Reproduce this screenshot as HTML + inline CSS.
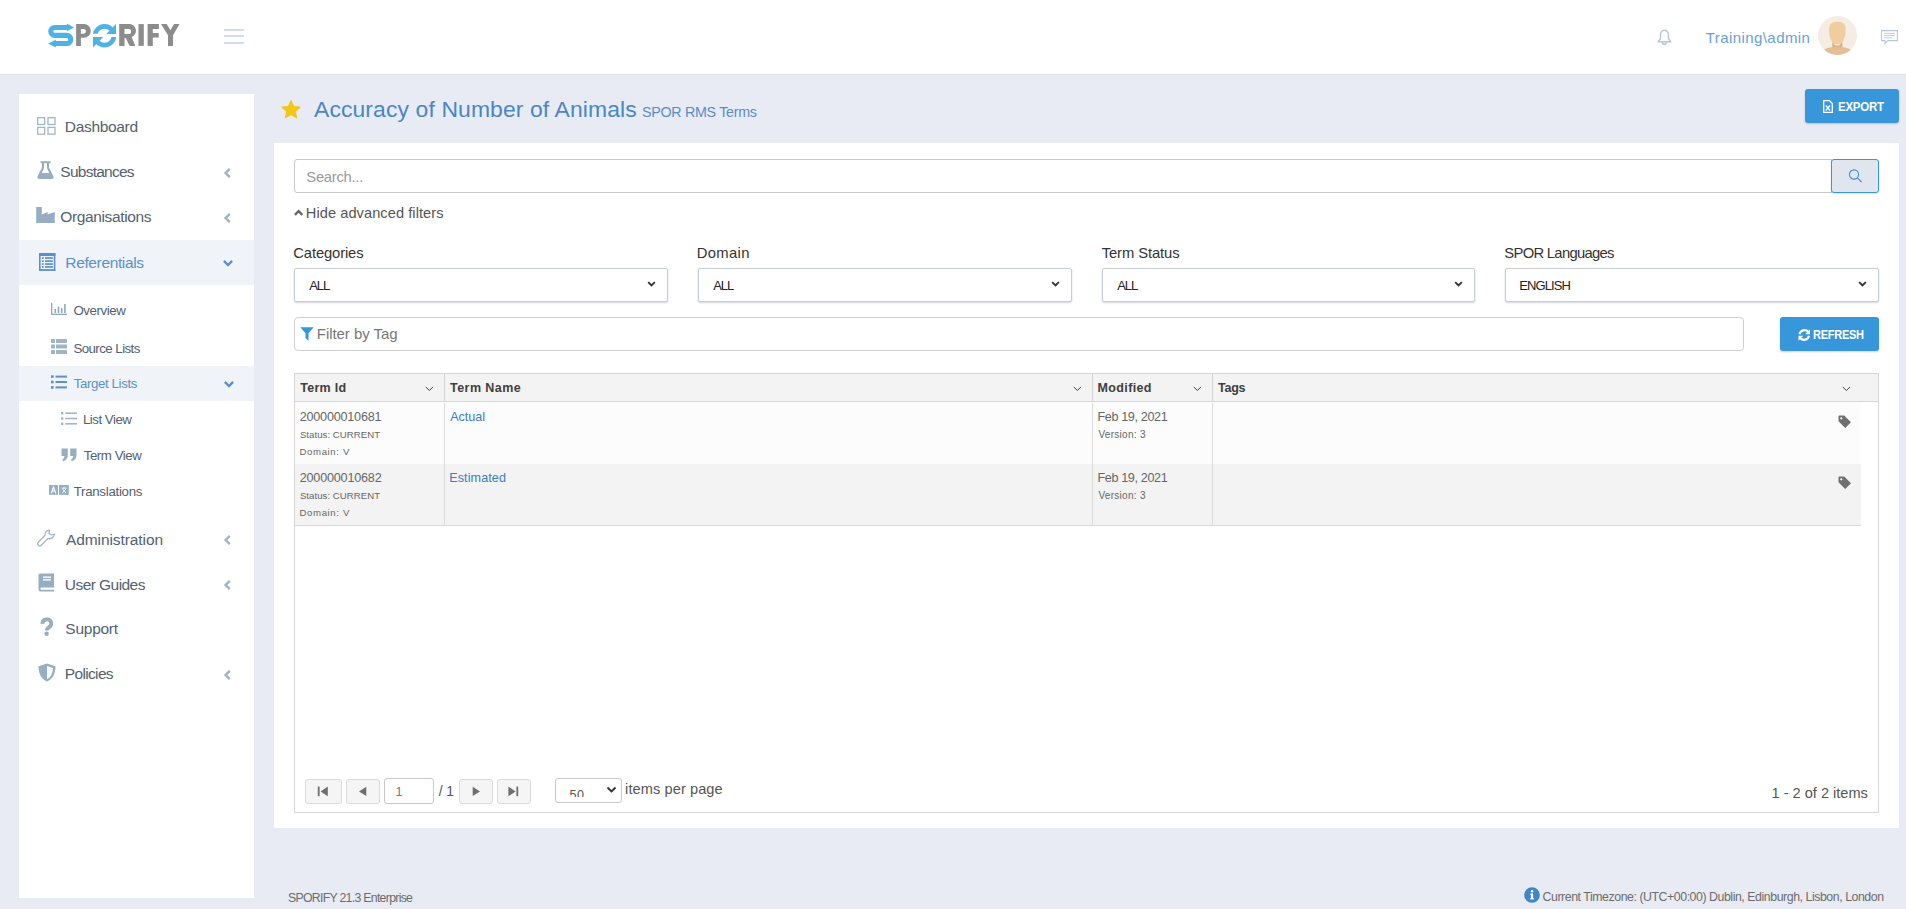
<!DOCTYPE html>
<html><head><meta charset="utf-8">
<style>
*{box-sizing:border-box;margin:0;padding:0}
html,body{width:1906px;height:909px;overflow:hidden}
body{background:#e8ebf3;font-family:"Liberation Sans",sans-serif;color:#333;position:relative}
.t{position:absolute;white-space:nowrap;line-height:1}
.b{position:absolute}
svg{position:absolute;overflow:visible}
</style></head>
<body>
<div class="b" style="left:0px;top:0px;width:1906px;height:74px;background:#fff;border-bottom:1px solid #dde1ea;height:75px"></div>
<svg style="left:40px;top:18px" width="150" height="34" viewBox="40 18 150 34">
<g fill="#8c8c8c">
<path fill-rule="evenodd" d="M76.1,24.1H84A6.8,6.8 0 0 1 84,37.7H80.9V46H76.1Z M80.9,28.9H83.5A2.45,2.45 0 0 1 83.5,33.8H80.9Z"/>
<path fill-rule="evenodd" d="M119.2,24.1H129A6.6,6.6 0 0 1 131.6,36.9L135.4,45.9H129.6L125.9,38.1H124.5V45.9H119.2Z M124.5,28.9H128.6A2.55,2.55 0 0 1 128.6,34H124.5Z"/>
<rect x="138.5" y="24.1" width="5.3" height="21.8"/>
<path d="M147.6,24.1H158.9V28.9H152.8V33.1H158.7V37.5H152.8V45.9H147.6Z"/>
<path d="M161,24.1H166.7L170.4,30.3L174,24.1H179.5L173,35.2V45.9H168V35.2Z"/>
</g>
<g fill="#4fb2e4">
<path d="M67.5,27.5H54.75A3.95,3.95 0 0 0 54.75,35.4H66.7A4.07,4.07 0 0 1 66.7,43.55H54.5" fill="none" stroke="#4fb2e4" stroke-width="5.1"/>
<path d="M66.8,23.4L74.1,27.4L66.8,31.3Z"/>
<path d="M55.8,39.7L48.2,43.5L55.8,47.4Z"/>
<clipPath id="cu"><path d="M91,22H117V33.8H91Z"/></clipPath>
<clipPath id="cl"><path d="M91,37.1H118V50H91Z"/></clipPath>
<circle cx="104.5" cy="35.75" r="9.45" fill="none" stroke="#4fb2e4" stroke-width="4.7" clip-path="url(#cu)"/>
<circle cx="104.5" cy="35.75" r="9.45" fill="none" stroke="#4fb2e4" stroke-width="4.7" clip-path="url(#cl)"/>
<path d="M116,24.1V33.9H106.3Z"/>
<path d="M93,47.6V37.1H103.2Z"/>
</g></svg>
<div class="b" style="left:224px;top:28.5px;width:20px;height:2px;background:#d3dce8"></div>
<div class="b" style="left:224px;top:35px;width:20px;height:2px;background:#d3dce8"></div>
<div class="b" style="left:224px;top:41.5px;width:20px;height:2px;background:#d3dce8"></div>
<svg style="left:1656.5px;top:28.5px" width="15" height="16" viewBox="0 0 15 16"><path d="M3.5,9.5V5.6A3.95,4.3 0 0 1 11.4,5.6V9.5L13.7,12.8H1.2L3.5,9.5Z" fill="none" stroke="#b5c5da" stroke-width="1.45" stroke-linejoin="round"/>
<path d="M5.2,13.2A2.1,2.1 0 0 0 9.4,13.2" fill="none" stroke="#b5c5da" stroke-width="1.4"/></svg>
<div class="t" style="left:1705.7px;top:30.3px;font-size:15px;color:#6a9fd6;letter-spacing:0.43px;">Training\admin</div>
<svg style="left:1818px;top:16px" width="39" height="39" viewBox="0 0 39 39"><circle cx="19.5" cy="19.5" r="19.5" fill="#f5ede3"/>
<clipPath id="avc"><circle cx="19.5" cy="19.5" r="19.5"/></clipPath>
<g clip-path="url(#avc)">
<path d="M0,42 L2,38 C6,32 12,30.8 19.3,30.5 C26.5,30.8 32.5,32 36.5,38 L39,42Z" fill="#e4bf93"/>
<path d="M14.5,24 C15,27 16.5,29.5 19.3,29.8 C22,29.5 23.8,27 24.2,24 L24.5,30.8 C22.5,31.5 16,31.5 14.2,30.8Z" fill="#dcb184"/>
<path d="M11,13.2 C11,7.6 14.5,5.8 19.3,5.8 C24.1,5.8 27.6,7.6 27.6,13.2 C27.6,19 26.3,23 24.7,25.5 C23.2,27.6 21.3,28.3 19.3,28.3 C17.3,28.3 15.4,27.6 13.9,25.5 C12.3,23 11,19 11,13.2Z" fill="#f0cd9e"/>
</g></svg>
<svg style="left:1881px;top:30px" width="17" height="14" viewBox="0 0 17 14"><path d="M0.6,0.6 H16.4 V10.6 H7 L4,13.5 V10.6 H0.6Z" fill="none" stroke="#b9c7d8" stroke-width="1.1"/>
<path d="M3,3.4H14M3,5.6H14M3,7.8H11" stroke="#b9c7d8" stroke-width="0.9"/></svg>
<div class="b" style="left:19px;top:94px;width:235px;height:804px;background:#fff"></div>
<div class="b" style="left:19px;top:240px;width:235px;height:45px;background:#f0f3f8"></div>
<div class="b" style="left:19px;top:366px;width:235px;height:35px;background:#f0f3f8"></div>
<div class="t" style="left:64.8px;top:118.9px;font-size:15.5px;color:#536170;letter-spacing:-0.32px;">Dashboard</div>
<div class="t" style="left:60.3px;top:164.1px;font-size:15.5px;color:#536170;letter-spacing:-0.75px;">Substances</div>
<div class="t" style="left:60.3px;top:208.9px;font-size:15.5px;color:#536170;letter-spacing:-0.37px;">Organisations</div>
<div class="t" style="left:65.3px;top:254.8px;font-size:15.5px;color:#5b90cc;letter-spacing:-0.36px;">Referentials</div>
<div class="t" style="left:73.4px;top:304.1px;font-size:13.3px;color:#536170;letter-spacing:-0.41px;">Overview</div>
<div class="t" style="left:73.4px;top:341.5px;font-size:13.3px;color:#536170;letter-spacing:-0.56px;">Source Lists</div>
<div class="t" style="left:73.7px;top:377.2px;font-size:13.3px;color:#5b90cc;letter-spacing:-0.39px;">Target Lists</div>
<div class="t" style="left:82.9px;top:413.2px;font-size:13.3px;color:#536170;letter-spacing:-0.49px;">List View</div>
<div class="t" style="left:83.7px;top:449.2px;font-size:13.3px;color:#536170;letter-spacing:-0.45px;">Term View</div>
<div class="t" style="left:73.7px;top:485.2px;font-size:13.3px;color:#536170;letter-spacing:-0.29px;">Translations</div>
<div class="t" style="left:66.0px;top:531.5px;font-size:15.5px;color:#536170;letter-spacing:-0.09px;">Administration</div>
<div class="t" style="left:64.8px;top:576.5px;font-size:15.5px;color:#536170;letter-spacing:-0.55px;">User Guides</div>
<div class="t" style="left:65.3px;top:620.5px;font-size:15.5px;color:#536170;letter-spacing:-0.25px;">Support</div>
<div class="t" style="left:64.8px;top:666.2px;font-size:15.5px;color:#536170;letter-spacing:-0.66px;">Policies</div>
<svg style="left:220px;top:164.9px" width="16" height="16" viewBox="0 0 16 16"><path d="M9.8,3.9 L5.6,8 L9.8,12.1" fill="none" stroke="#9fb3c5" stroke-width="2.4"/></svg>
<svg style="left:220px;top:209.9px" width="16" height="16" viewBox="0 0 16 16"><path d="M9.8,3.9 L5.6,8 L9.8,12.1" fill="none" stroke="#9fb3c5" stroke-width="2.4"/></svg>
<svg style="left:220px;top:532px" width="16" height="16" viewBox="0 0 16 16"><path d="M9.8,3.9 L5.6,8 L9.8,12.1" fill="none" stroke="#9fb3c5" stroke-width="2.4"/></svg>
<svg style="left:220px;top:577px" width="16" height="16" viewBox="0 0 16 16"><path d="M9.8,3.9 L5.6,8 L9.8,12.1" fill="none" stroke="#9fb3c5" stroke-width="2.4"/></svg>
<svg style="left:220px;top:666.8px" width="16" height="16" viewBox="0 0 16 16"><path d="M9.8,3.9 L5.6,8 L9.8,12.1" fill="none" stroke="#9fb3c5" stroke-width="2.4"/></svg>
<svg style="left:220.2px;top:256.9px" width="16" height="16" viewBox="0 0 16 16"><path d="M3.9,3.9 L8,8 L12.1,3.9" fill="none" stroke="#5b90cc" stroke-width="2.4"/></svg>
<svg style="left:221.2px;top:378px" width="16" height="16" viewBox="0 0 16 16"><path d="M3.9,3.9 L8,8 L12.1,3.9" fill="none" stroke="#5b90cc" stroke-width="2.4"/></svg>
<svg style="left:37px;top:117px" width="19" height="18" viewBox="0 0 19 18"><g fill="none" stroke="#a3b6c8" stroke-width="1.3"><rect x="0.7" y="0.7" width="7" height="6.8"/><rect x="11" y="0.7" width="7" height="6.8"/><rect x="0.7" y="10.4" width="7" height="6.8"/><rect x="11" y="10.4" width="7" height="6.8"/></g></svg>
<svg style="left:37px;top:161px" width="17" height="18" viewBox="0 0 17 18"><path d="M3.5,0.3H13.5V2.2H12V6.5L16.5,15.5C17,17 16,18 14.5,18H2.5C1,18 0,17 0.5,15.5L5,6.5V2.2H3.5Z" fill="#97aec2"/><path d="M7,2.2H10V7.2L12.2,12H4.8L7,7.2Z" fill="#fff"/></svg>
<svg style="left:36px;top:207px" width="19" height="17" viewBox="0 0 19 17"><path d="M0.2,0H5.8V7.4L11.7,5V7.4L18.75,5V16H0.2Z" fill="#97aec2"/></svg>
<svg style="left:39px;top:252.9px" width="16.4" height="18" viewBox="0 0 16.4 18"><g fill="#5b90cc"><rect x="0" y="0" width="16.4" height="3"/><rect x="0" y="0" width="1.6" height="17.9"/><rect x="14.8" y="0" width="1.6" height="17.9"/><rect x="0" y="16.1" width="16.4" height="1.8"/><rect x="2.9" y="4.2" width="1.8" height="1.7"/><rect x="6" y="4.2" width="7.9" height="1.7"/><rect x="2.9" y="7.3" width="1.8" height="1.7"/><rect x="6" y="7.3" width="7.9" height="1.7"/><rect x="2.9" y="10.2" width="1.8" height="1.7"/><rect x="6" y="10.2" width="7.9" height="1.7"/><rect x="2.9" y="13.1" width="1.8" height="1.7"/><rect x="6" y="13.1" width="7.9" height="1.7"/></g></svg>
<svg style="left:51px;top:303px" width="16" height="12" viewBox="0 0 16 12"><g fill="#8fa8bd"><rect x="0" y="0" width="1.3" height="12"/><rect x="0" y="10.7" width="16" height="1.3"/><rect x="3.5" y="6" width="1.6" height="4"/><rect x="6.7" y="3.5" width="1.6" height="6.5"/><rect x="9.9" y="5" width="1.6" height="5"/><rect x="13.1" y="1" width="1.6" height="9"/></g></svg>
<svg style="left:51px;top:339px" width="16" height="15" viewBox="0 0 16 15"><g fill="#a0b4c6"><rect x="0" y="0" width="4" height="4"/><rect x="5" y="0" width="11" height="4"/><rect x="0" y="5.5" width="4" height="4"/><rect x="5" y="5.5" width="11" height="4"/><rect x="0" y="11" width="4" height="4"/><rect x="5" y="11" width="11" height="4"/></g></svg>
<svg style="left:51px;top:375px" width="16" height="14" viewBox="0 0 16 14"><g fill="#5b90cc"><rect x="0" y="0.3" width="2.6" height="2.6"/><rect x="4.5" y="0.6" width="11.5" height="2"/><rect x="0" y="5.7" width="2.6" height="2.6"/><rect x="4.5" y="6" width="11.5" height="2"/><rect x="0" y="11.1" width="2.6" height="2.6"/><rect x="4.5" y="11.4" width="11.5" height="2"/></g></svg>
<svg style="left:61px;top:411.5px" width="16" height="13" viewBox="0 0 16 13"><g fill="#a3b6c8"><rect x="0" y="0" width="2.4" height="2.4"/><rect x="4.2" y="0.4" width="11.8" height="1.6"/><rect x="0" y="5.3" width="2.4" height="2.4"/><rect x="4.2" y="5.7" width="11.8" height="1.6"/><rect x="0" y="10.6" width="2.4" height="2.4"/><rect x="4.2" y="11" width="11.8" height="1.6"/></g></svg>
<svg style="left:61px;top:447.5px" width="16" height="13.5" viewBox="0 0 16 13.5"><g fill="#97aec2"><path d="M0.5,0.5H6.8V7C6.8,10 5,12.5 2,13.3L1.3,11.5C2.8,10.8 3.5,9.5 3.5,8H0.5Z"/><path d="M9.2,0.5H15.5V7C15.5,10 13.7,12.5 10.7,13.3L10,11.5C11.5,10.8 12.2,9.5 12.2,8H9.2Z"/></g></svg>
<svg style="left:49.2px;top:485px" width="20" height="10" viewBox="0 0 20 10"><rect x="0" y="0" width="9" height="9.8" fill="#97aec2"/><rect x="10" y="0" width="9.8" height="9.8" fill="#97aec2"/><path d="M2.3,8.2L4.5,2.2L6.7,8.2M3.2,6H5.8" fill="none" stroke="#fff" stroke-width="1.1"/><path d="M12.8,3.2H17.5M15,2V3.2M13.5,4L17,8M16.8,4L13.3,8" stroke="#fff" stroke-width="0.9"/></svg>
<svg style="left:37px;top:529px" width="19" height="18" viewBox="0 0 19 18"><path d="M12.5,0.8A5,5 0 0 0 8,6.5L1.3,13.3A2.1,2.1 0 0 0 4.3,16.3L11,9.5A5,5 0 0 0 17.5,5L14.8,6L12,4.5L12.5,0.8Z" fill="none" stroke="#a3b6c8" stroke-width="1.3" stroke-linejoin="round"/></svg>
<svg style="left:38px;top:572.5px" width="17" height="19" viewBox="0 0 17 19"><path d="M2,0.5H16V14.5H3A1.5,1.5 0 0 0 3,16.8H16V18.5H2.5A2,2 0 0 1 0.5,16.5V2A1.5,1.5 0 0 1 2,0.5Z" fill="#97aec2"/><rect x="5" y="3.5" width="8" height="1.4" fill="#fff"/><rect x="5" y="6.2" width="8" height="1.4" fill="#fff"/></svg>
<svg style="left:40px;top:618px" width="14" height="18" viewBox="0 0 14 18"><path d="M2.5,5.8A4.4,4.1 0 1 1 9.2,9C7.6,10.1 6.7,10.8 6.7,12.6" fill="none" stroke="#97aec2" stroke-width="3.9"/><circle cx="6.6" cy="15.8" r="2.2" fill="#97aec2"/></svg>
<svg style="left:37.5px;top:662.5px" width="18" height="19" viewBox="0 0 18 19"><path d="M9,0.5L17.5,3.2C17.5,11 14.5,16 9,18.5C3.5,16 0.5,11 0.5,3.2Z" fill="#97aec2"/><path d="M9,3L15,5C14.8,10.5 12.8,14.2 9,16.3Z" fill="#fff"/></svg>
<svg style="left:281px;top:100px" width="20" height="19" viewBox="0 0 20 19"><path d="M10,0.8L12.6,6.6L18.9,7.2L14.2,11.4L15.6,17.7L10,14.4L4.4,17.7L5.8,11.4L1.1,7.2L7.4,6.6Z" fill="#f5c518" stroke="#f5c518" stroke-width="1.2" stroke-linejoin="round"/></svg>
<div class="t" style="left:314.0px;top:98.1px;font-size:22.9px;color:#4a86c6;letter-spacing:0.12px;">Accuracy of Number of Animals</div>
<div class="t" style="left:641.9px;top:104.6px;font-size:14.3px;color:#5a8cc6;letter-spacing:-0.29px;">SPOR RMS Terms</div>
<div class="b" style="left:1805px;top:89px;width:94px;height:34px;background:#3897db;border-radius:3px;box-shadow:0 1px 2px rgba(0,0,0,0.18)"></div>
<svg style="left:1823px;top:100px" width="10" height="13" viewBox="0 0 10 13"><path d="M0.7,0.7H6.5L9.3,3.5V12.3H0.7Z" fill="none" stroke="#fff" stroke-width="1.3"/><path d="M2.8,5.5L7,10.5M7,5.5L2.8,10.5" stroke="#fff" stroke-width="1.3"/></svg>
<div class="t" style="left:1838.2px;top:101.3px;font-size:12.8px;color:#fff;font-weight:bold;transform:scaleX(0.897);transform-origin:0.8px 0;letter-spacing:-0.30px;">EXPORT</div>
<div class="b" style="left:274px;top:143px;width:1625px;height:685px;background:#fff"></div>
<div class="b" style="left:294px;top:159px;width:1538px;height:34px;background:#fff;border:1px solid #c9c9c9;border-radius:3px 0 0 3px"></div>
<div class="t" style="left:306.3px;top:169.8px;font-size:14.8px;color:#9a9a9a;letter-spacing:-0.28px;">Search...</div>
<div class="b" style="left:1831px;top:159px;width:48px;height:34px;background:#e1e5ed;border:1px solid #3797db;border-radius:3px;box-shadow:0 1px 2px rgba(0,0,0,0.12)"></div>
<svg style="left:1847px;top:167px" width="16" height="16" viewBox="0 0 16 16"><circle cx="7" cy="7.5" r="4.6" fill="none" stroke="#3f90d8" stroke-width="1.1"/><path d="M10.3,10.8L14.6,15" stroke="#3f90d8" stroke-width="1.1"/></svg>
<svg style="left:294px;top:208px" width="10" height="9" viewBox="0 0 10 9"><path d="M0.9,6.9L4.6,3.2L8.3,6.9" fill="none" stroke="#666" stroke-width="2.3"/></svg>
<div class="t" style="left:305.8px;top:205.6px;font-size:14.6px;color:#555;letter-spacing:0.07px;">Hide advanced filters</div>
<div class="t" style="left:293.3px;top:245.8px;font-size:14.8px;color:#333;letter-spacing:-0.14px;">Categories</div>
<div class="b" style="left:294px;top:268px;width:374px;height:34px;background:#fff;border:1px solid #c7ccd9;border-radius:2px;box-shadow:0 1px 2px rgba(80,90,120,0.25)"></div>
<div class="t" style="left:309.3px;top:279.0px;font-size:13px;color:#222;letter-spacing:-1.12px;">ALL</div>
<svg style="left:647px;top:280.5px" width="9" height="6" viewBox="0 0 9 6"><path d="M1.2,1.2L4.5,4.5L7.8,1.2" fill="none" stroke="#333" stroke-width="1.9"/></svg>
<div class="t" style="left:696.8px;top:245.8px;font-size:14.8px;color:#333;letter-spacing:0.33px;">Domain</div>
<div class="b" style="left:698px;top:268px;width:374px;height:34px;background:#fff;border:1px solid #c7ccd9;border-radius:2px;box-shadow:0 1px 2px rgba(80,90,120,0.25)"></div>
<div class="t" style="left:713.3px;top:279.0px;font-size:13px;color:#222;letter-spacing:-1.12px;">ALL</div>
<svg style="left:1051px;top:280.5px" width="9" height="6" viewBox="0 0 9 6"><path d="M1.2,1.2L4.5,4.5L7.8,1.2" fill="none" stroke="#333" stroke-width="1.9"/></svg>
<div class="t" style="left:1101.7px;top:245.8px;font-size:14.8px;color:#333;letter-spacing:-0.11px;">Term Status</div>
<div class="b" style="left:1102px;top:268px;width:373px;height:34px;background:#fff;border:1px solid #c7ccd9;border-radius:2px;box-shadow:0 1px 2px rgba(80,90,120,0.25)"></div>
<div class="t" style="left:1117.3px;top:279.0px;font-size:13px;color:#222;letter-spacing:-1.12px;">ALL</div>
<svg style="left:1454px;top:280.5px" width="9" height="6" viewBox="0 0 9 6"><path d="M1.2,1.2L4.5,4.5L7.8,1.2" fill="none" stroke="#333" stroke-width="1.9"/></svg>
<div class="t" style="left:1504.3px;top:245.8px;font-size:14.8px;color:#333;letter-spacing:-0.70px;">SPOR Languages</div>
<div class="b" style="left:1505px;top:268px;width:374px;height:34px;background:#fff;border:1px solid #c7ccd9;border-radius:2px;box-shadow:0 1px 2px rgba(80,90,120,0.25)"></div>
<div class="t" style="left:1519.3px;top:279.0px;font-size:13px;color:#222;letter-spacing:-0.90px;">ENGLISH</div>
<svg style="left:1858px;top:280.5px" width="9" height="6" viewBox="0 0 9 6"><path d="M1.2,1.2L4.5,4.5L7.8,1.2" fill="none" stroke="#333" stroke-width="1.9"/></svg>
<div class="b" style="left:294px;top:317px;width:1450px;height:34px;background:#fff;border:1px solid #cfcfcf;border-radius:4px"></div>
<svg style="left:300px;top:326.5px" width="14" height="14" viewBox="0 0 14 14"><path d="M0.3,0.3H13.7L8.5,6.3V13.7L5.5,11V6.3Z" fill="#3598dc"/></svg>
<div class="t" style="left:316.8px;top:326.0px;font-size:15px;color:#777;letter-spacing:-0.06px;">Filter by Tag</div>
<div class="b" style="left:1780px;top:317px;width:99px;height:34px;background:#3897db;border-radius:3px;box-shadow:0 1px 2px rgba(0,0,0,0.18)"></div>
<svg style="left:1798px;top:328.5px" width="12.5" height="12" viewBox="0 0 12.5 12"><path d="M1.6,5.2A4.9,4.9 0 0 1 10.2,3" fill="none" stroke="#fff" stroke-width="2.2"/><path d="M12,0.3V5.2H7.2Z" fill="#fff"/><path d="M10.9,6.8A4.9,4.9 0 0 1 2.3,9" fill="none" stroke="#fff" stroke-width="2.2"/><path d="M0.5,11.7V6.8H5.3Z" fill="#fff"/></svg>
<div class="t" style="left:1812.9px;top:328.9px;font-size:12.3px;color:#fff;font-weight:bold;transform:scaleX(0.895);transform-origin:0.8px 0;letter-spacing:-0.30px;">REFRESH</div>
<div class="b" style="left:294px;top:373px;width:1585px;height:440px;background:#fff;border:1px solid #d6d6d6"></div>
<div class="b" style="left:295px;top:374px;width:1583px;height:27px;background:#f3f3f3;border-bottom:1px solid #d6d6d6;height:28px"></div>
<div class="b" style="left:295px;top:402px;width:1566px;height:62px;background:#fcfcfc"></div>
<div class="b" style="left:295px;top:464px;width:1566px;height:61px;background:#f3f3f3;border-bottom:1px solid #d9d9d9;height:62px"></div>
<div class="b" style="left:444px;top:374px;width:1px;height:28px;background:#d6d6d6"></div>
<div class="b" style="left:444px;top:403px;width:1px;height:123px;background:#dadada"></div>
<div class="b" style="left:1092px;top:374px;width:1px;height:28px;background:#d6d6d6"></div>
<div class="b" style="left:1092px;top:403px;width:1px;height:123px;background:#dadada"></div>
<div class="b" style="left:1212px;top:374px;width:1px;height:28px;background:#d6d6d6"></div>
<div class="b" style="left:1212px;top:403px;width:1px;height:123px;background:#dadada"></div>
<div class="t" style="left:300.2px;top:381.6px;font-size:12.5px;color:#404040;font-weight:bold;letter-spacing:0.29px;">Term Id</div>
<div class="t" style="left:450.1px;top:381.6px;font-size:12.5px;color:#404040;font-weight:bold;letter-spacing:0.43px;">Term Name</div>
<div class="t" style="left:1097.6px;top:381.6px;font-size:12.5px;color:#404040;font-weight:bold;letter-spacing:0.36px;">Modified</div>
<div class="t" style="left:1217.9px;top:381.6px;font-size:12.5px;color:#404040;font-weight:bold;letter-spacing:-0.21px;">Tags</div>
<svg style="left:425px;top:386px" width="9" height="6" viewBox="0 0 9 6"><path d="M0.8,0.9L4.4,4.6L8,0.9" fill="none" stroke="#444" stroke-width="1"/></svg>
<svg style="left:1073px;top:386px" width="9" height="6" viewBox="0 0 9 6"><path d="M0.8,0.9L4.4,4.6L8,0.9" fill="none" stroke="#444" stroke-width="1"/></svg>
<svg style="left:1193px;top:386px" width="9" height="6" viewBox="0 0 9 6"><path d="M0.8,0.9L4.4,4.6L8,0.9" fill="none" stroke="#444" stroke-width="1"/></svg>
<svg style="left:1842px;top:386px" width="9" height="6" viewBox="0 0 9 6"><path d="M0.8,0.9L4.4,4.6L8,0.9" fill="none" stroke="#444" stroke-width="1"/></svg>
<div class="t" style="left:299.7px;top:410.6px;font-size:12.6px;color:#666;letter-spacing:-0.20px;">200000010681</div>
<div class="t" style="left:299.9px;top:429.7px;font-size:9.6px;color:#666;letter-spacing:0.05px;">Status: CURRENT</div>
<div class="t" style="left:299.5px;top:446.7px;font-size:9.6px;color:#666;letter-spacing:0.63px;">Domain: V</div>
<div class="t" style="left:450.2px;top:410.7px;font-size:12.6px;color:#3a7dc1;letter-spacing:-0.03px;">Actual</div>
<div class="t" style="left:1097.4px;top:410.8px;font-size:12.6px;color:#666;letter-spacing:-0.35px;">Feb 19, 2021</div>
<div class="t" style="left:1098.4px;top:430.0px;font-size:10px;color:#666;letter-spacing:0.30px;">Version: 3</div>
<svg style="left:1838px;top:415px" width="14" height="13" viewBox="0 0 14 13"><path d="M0.5,1.2A0.8,0.8 0 0 1 1.3,0.4H6.2L13,7.2L7.2,13L0.5,6.3Z" fill="#707070"/><circle cx="3.3" cy="3.3" r="1.1" fill="#fff"/></svg>
<div class="t" style="left:299.7px;top:471.6px;font-size:12.6px;color:#666;letter-spacing:-0.19px;">200000010682</div>
<div class="t" style="left:299.9px;top:490.7px;font-size:9.6px;color:#666;letter-spacing:0.05px;">Status: CURRENT</div>
<div class="t" style="left:299.5px;top:507.7px;font-size:9.6px;color:#666;letter-spacing:0.63px;">Domain: V</div>
<div class="t" style="left:449.2px;top:471.7px;font-size:12.6px;color:#3a7dc1;letter-spacing:0.10px;">Estimated</div>
<div class="t" style="left:1097.4px;top:471.8px;font-size:12.6px;color:#666;letter-spacing:-0.35px;">Feb 19, 2021</div>
<div class="t" style="left:1098.4px;top:491.0px;font-size:10px;color:#666;letter-spacing:0.30px;">Version: 3</div>
<svg style="left:1838px;top:476px" width="14" height="13" viewBox="0 0 14 13"><path d="M0.5,1.2A0.8,0.8 0 0 1 1.3,0.4H6.2L13,7.2L7.2,13L0.5,6.3Z" fill="#707070"/><circle cx="3.3" cy="3.3" r="1.1" fill="#fff"/></svg>
<div class="b" style="left:305px;top:779px;width:37px;height:25px;background:#f5f5f5;border:1px solid #dadada;border-radius:3px"></div>
<svg style="left:305px;top:779px" width="37" height="25" viewBox="0 0 37 25"><rect x="12.8" y="7.6" width="1.8" height="9.6" fill="#6f6f6f"/><path d="M22.8,7.6V17.2L15.6,12.4Z" fill="#6f6f6f"/></svg>
<div class="b" style="left:346px;top:779px;width:34px;height:25px;background:#f5f5f5;border:1px solid #dadada;border-radius:3px"></div>
<svg style="left:346px;top:779px" width="34" height="25" viewBox="0 0 34 25"><path d="M20.3,7.8V17L13,12.4Z" fill="#6f6f6f"/></svg>
<div class="b" style="left:384px;top:778px;width:50px;height:26px;background:#fff;border:1px solid #c9c9c9;border-radius:3px"></div>
<div class="t" style="left:395.6px;top:786.3px;font-size:12.6px;color:#777;">1</div>
<div class="t" style="left:438.7px;top:784.0px;font-size:14px;color:#555;letter-spacing:-0.16px;">/ 1</div>
<div class="b" style="left:459px;top:779px;width:34px;height:25px;background:#f5f5f5;border:1px solid #dadada;border-radius:3px"></div>
<svg style="left:459px;top:779px" width="34" height="25" viewBox="0 0 34 25"><path d="M13.7,7.8V17L21,12.4Z" fill="#6f6f6f"/></svg>
<div class="b" style="left:497px;top:779px;width:34px;height:25px;background:#f5f5f5;border:1px solid #dadada;border-radius:3px"></div>
<svg style="left:497px;top:779px" width="34" height="25" viewBox="0 0 34 25"><path d="M11.4,7.6V17.2L18.6,12.4Z" fill="#6f6f6f"/><rect x="19.4" y="7.6" width="1.8" height="9.6" fill="#6f6f6f"/></svg>
<div class="b" style="left:555px;top:778px;width:67px;height:25px;background:#fff;border:1px solid #c9c9c9;border-radius:3px"></div>
<div class="b" style="left:556px;top:779px;width:40px;height:18px;overflow:hidden"><div class="t" style="left:13.5px;top:10.0px;font-size:12.6px;color:#555;letter-spacing:0.46px;">50</div>
</div>
<svg style="left:606px;top:786px" width="12" height="8" viewBox="0 0 12 8"><path d="M1.5,1.5L5.5,5.5L9.5,1.5" fill="none" stroke="#333" stroke-width="1.9"/></svg>
<div class="t" style="left:625.1px;top:782.3px;font-size:14.6px;color:#555;letter-spacing:0.08px;">items per page</div>
<div class="t" style="left:1771.5px;top:785.7px;font-size:14.6px;color:#555;letter-spacing:-0.01px;">1 - 2 of 2 items</div>
<div class="t" style="left:288.0px;top:892.1px;font-size:12.3px;color:#6c6c6c;letter-spacing:-0.71px;">SPORIFY 21.3 Enterprise</div>
<svg style="left:1524px;top:887px" width="16" height="16" viewBox="0 0 16 16"><circle cx="8" cy="8" r="7.8" fill="#3e86c7"/><rect x="7" y="6.6" width="2.1" height="5.6" fill="#fff"/><rect x="6.2" y="11.2" width="3.8" height="1.2" fill="#fff"/><rect x="6.2" y="6.6" width="2.5" height="1.2" fill="#fff"/><circle cx="8.1" cy="4.3" r="1.2" fill="#fff"/></svg>
<div class="t" style="left:1542.6px;top:891.1px;font-size:12.3px;color:#6c6c6c;letter-spacing:-0.43px;">Current Timezone: (UTC+00:00) Dublin, Edinburgh, Lisbon, London</div>
</body></html>
